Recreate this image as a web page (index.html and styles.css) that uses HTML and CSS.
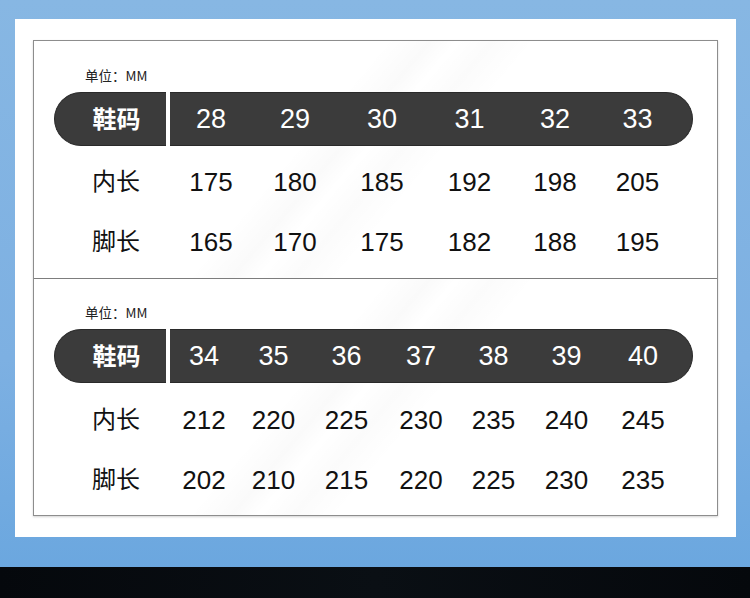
FILE: index.html
```html
<!DOCTYPE html>
<html lang="zh-CN">
<head>
<meta charset="utf-8">
<title>尺码表</title>
<link rel="stylesheet" href="styles.css">
</head>
<body>
<div class="page">
  <div class="panel">
    <div class="chart">
      <section class="sec sec-a">
        <div class="unit">单位：MM</div>
        <div class="row head">
          <div class="label">鞋码</div>
          <div class="vals"><span>28</span><span>29</span><span>30</span><span>31</span><span>32</span><span>33</span></div>
        </div>
        <div class="row">
          <div class="label">内长</div>
          <div class="vals"><span>175</span><span>180</span><span>185</span><span>192</span><span>198</span><span>205</span></div>
        </div>
        <div class="row">
          <div class="label">脚长</div>
          <div class="vals"><span>165</span><span>170</span><span>175</span><span>182</span><span>188</span><span>195</span></div>
        </div>
      </section>
      <section class="sec sec-b">
        <div class="unit">单位：MM</div>
        <div class="row head">
          <div class="label">鞋码</div>
          <div class="vals"><span>34</span><span>35</span><span>36</span><span>37</span><span>38</span><span>39</span><span>40</span></div>
        </div>
        <div class="row">
          <div class="label">内长</div>
          <div class="vals"><span>212</span><span>220</span><span>225</span><span>230</span><span>235</span><span>240</span><span>245</span></div>
        </div>
        <div class="row">
          <div class="label">脚长</div>
          <div class="vals"><span>202</span><span>210</span><span>215</span><span>220</span><span>225</span><span>230</span><span>235</span></div>
        </div>
      </section>
    </div>
  </div>
  <div class="footer"></div>
</div>
</body>
</html>
```

FILE: styles.css
```css
html, body {
  margin: 0;
  padding: 0;
}
body {
  width: 750px;
  height: 598px;
  overflow: hidden;
  font-family: "Liberation Sans", Arial, "Noto Sans CJK SC", sans-serif;
}
.page {
  width: 750px;
  height: 598px;
  display: flex;
  flex-direction: column;
  background: linear-gradient(180deg, #87b7e3 0%, #7db0e2 60%, #6ba7df 95%);
}
.panel {
  width: 721px;
  height: 518px;
  box-sizing: border-box;
  margin: 19px 0 30px 15px;
  padding: 21px 18px;
  background: #ffffff;
}
.chart {
  width: 685px;
  height: 476px;
  box-sizing: border-box;
  border: 1px solid #8d8d8d;
  box-shadow: 0 1px 2px rgba(0, 0, 0, 0.18);
  background: #fff;
}
.sec {
  box-sizing: border-box;
  background:
    linear-gradient(130deg, rgba(255,255,255,0) 40%, rgba(0,0,0,0.018) 45%, rgba(255,255,255,0) 48%, rgba(0,0,0,0.015) 52%, rgba(255,255,255,0) 57%),
    #ffffff;
}
.sec-a {
  height: 237px;
  padding: 26px 0 6px;
}
.sec-b {
  height: 237px;
  border-top: 1px solid #7d7d7d;
  padding: 25px 0 5px;
}
.unit {
  height: 16px;
  line-height: 16px;
  margin: 0 0 9px 51px;
  font-family: "Noto Sans CJK SC", "Liberation Sans", sans-serif;
  font-size: 13.5px;
  color: #222;
}
.row {
  display: flex;
  height: 60px;
  padding: 0 24px 0 20px;
  align-items: stretch;
}
.row.head {
  height: 54px;
  margin-bottom: 6px;
}
.sec-b .row.head {
  margin-bottom: 7px;
}
.label {
  width: 112px;
  box-sizing: border-box;
  padding: 0 0 6px 12px;
  display: flex;
  align-items: center;
  justify-content: center;
  font-family: "Noto Sans CJK SC", sans-serif;
  font-size: 24px;
  font-weight: 400;
  color: #111;
}
.vals {
  flex: 1;
  margin-left: 4px;
  display: grid;
  align-items: center;
  justify-items: center;
  font-size: 26px;
  color: #111;
}
.sec-a .vals {
  grid-template-columns: 82px 86px 88px 87px 84px 81px;
}
.sec-b .vals {
  grid-template-columns: 68px 71px 75px 74px 71px 75px 78px;
}
.head .label {
  padding-bottom: 4px;
  background: #3b3b3b;
  border: 1px solid #2a2a2a;
  border-right: none;
  border-radius: 27px 0 0 27px;
  color: #fff;
  font-weight: 700;
}
.head .vals {
  background: #3b3b3b;
  border: 1px solid #2a2a2a;
  border-left: none;
  border-radius: 0 27px 27px 0;
  color: #fff;
  font-size: 27px;
}
.footer {
  flex: 1;
  background: linear-gradient(90deg, #05080c, #0a0f14 50%, #05080c);
}
```
